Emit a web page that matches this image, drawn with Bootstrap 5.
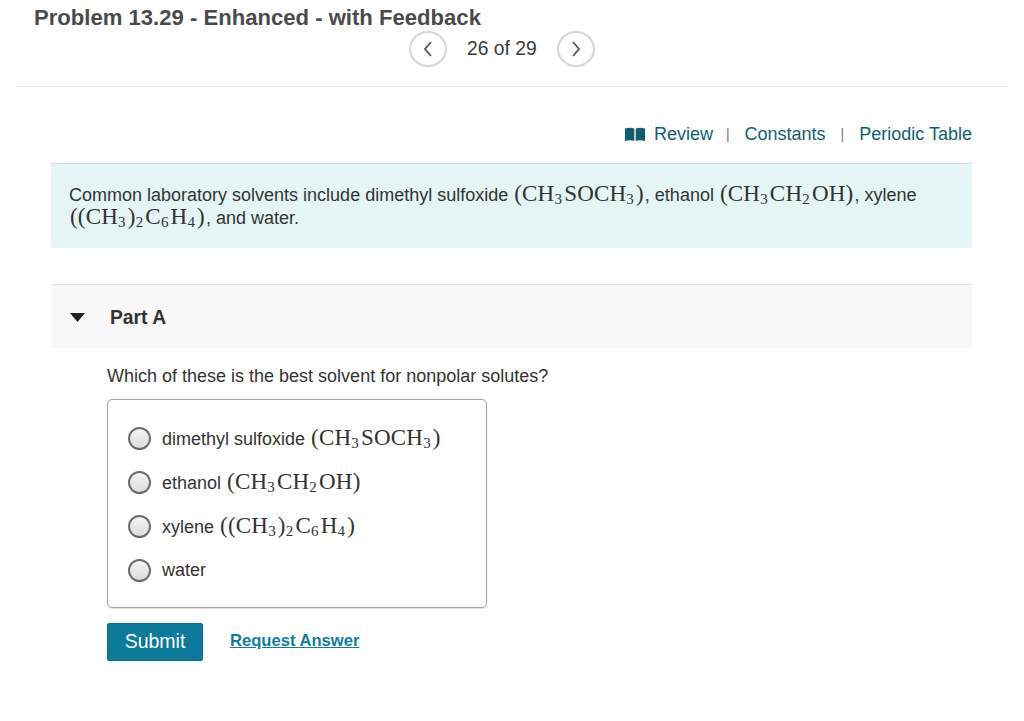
<!DOCTYPE html>
<html lang="en">
<head>
    <meta charset="UTF-8">
    <meta name="viewport" content="width=device-width, initial-scale=1.0">
    <title>Problem 13.29</title>
    <link rel="stylesheet" href="https://cdn.jsdelivr.net/npm/bootstrap@5.3.0/dist/css/bootstrap.min.css">
    <script src="https://cdn.jsdelivr.net/npm/bootstrap@5.3.0/dist/js/bootstrap.bundle.min.js" defer></script>
    <style>
        body {
            background-color: #fff;
            color: #333;
            font-family: "Liberation Sans", Arial, sans-serif;
            font-size: 18px;
            line-height: 24px;
        }
        .page-head {
            height: 87px;
            margin: 0 16px;
            border-bottom: 1px solid #e2e2e2;
        }
        .page-title {
            font-size: 22.1px;
            line-height: 26px;
            font-weight: 700;
            color: #4a4a4a;
            margin: 0 0 0 18px;
            padding-top: 5px;
        }
        .pager-row {
            margin-left: 393px;
            gap: 20px;
            color: #3a3a3a;
            font-size: 19.3px;
        }
        .pager-btn {
            width: 38px;
            height: 36px;
            padding: 0;
            background: #fff;
            border: 2px solid #d6d6d6;
            border-radius: 50%;
            display: flex;
            align-items: center;
            justify-content: center;
        }
        .tool-links {
            margin: 35px 52px 0 51px;
            height: 24px;
            gap: 15px;
            font-size: 18px;
        }
        .tool-links a { color: #0f5f70; text-decoration: none; }
        .tool-links .sep { color: #777; font-size: 14px; }
        .tool-links .review-link { gap: 9px; margin-right: -2px; }
        .intro-box {
            margin: 17px 52px 0 51px;
            height: 85px;
            padding: 18px 18px 0;
            background-color: #e5f5f5;
            border-top: 1px solid #d5dcdc;
            font-size: 18px;
            line-height: 20px;
        }
        .part-bar {
            margin: 36px 52px 0 51px;
            height: 64px;
            padding: 2px 0 0 19px;
            background-color: #f8f8f8;
            border-top: 1px solid #e2e2e2;
            gap: 25px;
            font-weight: 700;
            font-size: 19.3px;
            color: #333;
        }
        .part-body { margin: 16px 0 0 107px; }
        .part-q { margin: 0 0 11px; line-height: 24px; }
        .choice-box {
            width: 380px;
            height: 209px;
            padding: 16px 20px 0;
            border: 1px solid #a3a3a3;
            border-radius: 5px;
            box-shadow: 0 1px 1px rgba(0, 0, 0, .12);
        }
        .choice-row { height: 44px; gap: 11px; }
        .radio-dot {
            width: 23px;
            height: 23px;
            flex: none;
            border: 2px solid #6d6d6d;
            border-radius: 50%;
            background: linear-gradient(#f6f6f6, #dcdcdc);
        }
        .chem {
            font-family: "Liberation Serif", "Times New Roman", serif;
            font-size: 23px;
            line-height: 1;
            color: #333;
            letter-spacing: .2px;
            margin: 0 1px;
        }
        .chem sub {
            font-size: 15px;
            bottom: -.2em;
            line-height: 0;
            margin-right: 2px;
        }
        .submit-btn {
            width: 96px;
            height: 38px;
            padding: 0;
            background-color: #0b7a9b;
            border: 1px solid #0a7090;
            border-radius: 2px;
            color: #fff;
            font-size: 19.5px;
        }
        .answer-link {
            color: #107f9e;
            font-weight: 700;
            font-size: 16.6px;
            margin-bottom: 3px;
            text-decoration: underline;
        }
        .action-row { margin-top: 15px; gap: 27px; }
    </style>
</head>
<body>
    <!-- Header -->
    <header class="page-head">
        <h1 class="page-title">Problem 13.29 - Enhanced - with Feedback</h1>
        <div class="pager-row d-flex align-items-center">
            <button class="pager-btn" aria-label="Previous">
                <svg width="12" height="18" viewBox="0 0 12 18"><path d="M9 2 3 9l6 7" fill="none" stroke="#555" stroke-width="1.8"/></svg>
            </button>
            <span>26 of 29</span>
            <button class="pager-btn" aria-label="Next">
                <svg width="12" height="18" viewBox="0 0 12 18"><path d="M3 2l6 7-6 7" fill="none" stroke="#555" stroke-width="1.8"/></svg>
            </button>
        </div>
    </header>

    <!-- Links -->
    <div class="tool-links d-flex justify-content-end align-items-center">
        <a href="#" class="review-link d-flex align-items-center">
            <svg width="20" height="15" viewBox="0 0 20 15"><path d="M0 1.500Q5 0 9.300 1.500V14Q5 12.500 0 14zM10.700 1.500Q15 0 20 1.500V14Q15 12.500 10.700 14z" fill="#0f5f70"/></svg>
            Review
        </a>
        <span class="sep">|</span>
        <a href="#">Constants</a>
        <span class="sep">|</span>
        <a href="#">Periodic Table</a>
    </div>

    <!-- Intro -->
    <div class="intro-box">
        Common laboratory solvents include dimethyl sulfoxide <span class="chem">(CH<sub>3</sub>SOCH<sub>3</sub>)</span>, ethanol <span class="chem">(CH<sub>3</sub>CH<sub>2</sub>OH)</span>, xylene <span class="chem">((CH<sub>3</sub>)<sub>2</sub>C<sub>6</sub>H<sub>4</sub>)</span>, and water.
    </div>

    <!-- Part A -->
    <div class="part-bar d-flex align-items-center">
        <svg width="15" height="9" viewBox="0 0 15 9"><path d="M0 0h15L7.500 9z" fill="#222"/></svg>
        <span>Part A</span>
    </div>

    <div class="part-body">
        <p class="part-q">Which of these is the best solvent for nonpolar solutes?</p>
        <div class="choice-box">
            <div class="choice-row d-flex align-items-center"><span class="radio-dot"></span><span>dimethyl sulfoxide <span class="chem">(CH<sub>3</sub>SOCH<sub>3</sub>)</span></span></div>
            <div class="choice-row d-flex align-items-center"><span class="radio-dot"></span><span>ethanol <span class="chem">(CH<sub>3</sub>CH<sub>2</sub>OH)</span></span></div>
            <div class="choice-row d-flex align-items-center"><span class="radio-dot"></span><span>xylene <span class="chem">((CH<sub>3</sub>)<sub>2</sub>C<sub>6</sub>H<sub>4</sub>)</span></span></div>
            <div class="choice-row d-flex align-items-center"><span class="radio-dot"></span><span>water</span></div>
        </div>
        <div class="action-row d-flex align-items-center">
            <button class="btn submit-btn">Submit</button>
            <a href="#" class="answer-link">Request Answer</a>
        </div>
    </div>
</body>
</html>
